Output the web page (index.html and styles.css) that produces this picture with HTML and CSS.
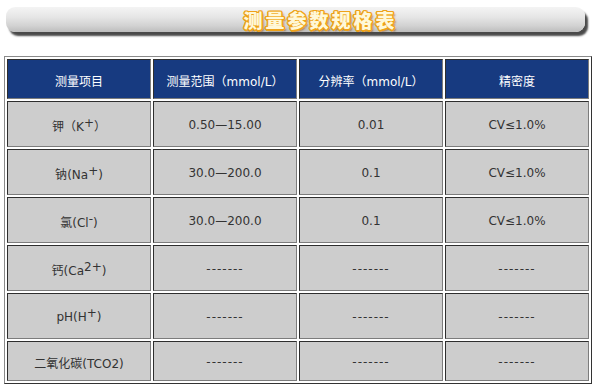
FILE: index.html
```html
<!DOCTYPE html>
<html lang="zh">
<head>
<meta charset="utf-8">
<title>测量参数规格表</title>
<link rel="stylesheet" href="styles.css">
</head>
<body>
<div class="page">
  <div class="title-bar">
    <h1 class="title">测量参数规格表</h1>
  </div>
  <table class="spec">
    <thead>
      <tr class="head-row">
        <th><span class="zh">测量项目</span></th>
        <th><span class="zh">测量范围（</span>mmol/L<span class="zh">）</span></th>
        <th><span class="zh">分辨率（</span>mmol/L<span class="zh">）</span></th>
        <th><span class="zh">精密度</span></th>
      </tr>
    </thead>
    <tbody>
      <tr class="row">
        <td><span class="zh">钾（</span>K<sup>+</sup><span class="zh">）</span></td>
        <td>0.50—15.00</td>
        <td>0.01</td>
        <td>CV≤1.0%</td>
      </tr>
      <tr class="row">
        <td><span class="zh">钠</span>(Na<sup>+</sup>)</td>
        <td>30.0—200.0</td>
        <td>0.1</td>
        <td>CV≤1.0%</td>
      </tr>
      <tr class="row">
        <td><span class="zh">氯</span>(Cl<sup>-</sup>)</td>
        <td>30.0—200.0</td>
        <td>0.1</td>
        <td>CV≤1.0%</td>
      </tr>
      <tr class="row">
        <td><span class="zh">钙</span>(Ca<sup>2+</sup>)</td>
        <td class="dash">-------</td>
        <td class="dash">-------</td>
        <td class="dash">-------</td>
      </tr>
      <tr class="row">
        <td>pH(H<sup>+</sup>)</td>
        <td class="dash">-------</td>
        <td class="dash">-------</td>
        <td class="dash">-------</td>
      </tr>
      <tr class="row row-last">
        <td><span class="zh">二氧化碳</span>(TCO2)</td>
        <td class="dash">-------</td>
        <td class="dash">-------</td>
        <td class="dash">-------</td>
      </tr>
    </tbody>
  </table>
</div>
</body>
</html>
```
FILE: styles.css
```css
html, body {
  margin: 0;
  padding: 0;
  background: #ffffff;
}

.page {
  padding-top: 7px;
  font-family: "DejaVu Sans", "Noto Sans CJK SC", sans-serif;
}

.title-bar {
  margin-left: 6px;
  width: 579px;
  height: 25px;
  border-radius: 9px;
  background: linear-gradient(to bottom, #f4f4f4 0%, #e6e6e6 40%, #d2d2d2 75%, #bdbdbd 100%);
  box-shadow: 3px 4px 2px #4a4a4a;
  display: flex;
  justify-content: center;
  align-items: center;
  padding-left: 50px;
  box-sizing: border-box;
}

.title {
  margin: 0;
  font-family: "Noto Sans CJK SC", sans-serif;
  font-weight: 900;
  font-size: 19px;
  line-height: 25px;
  letter-spacing: 3px;
  color: #fff8d8;
  text-shadow:
    1.5px 0 0 #eea21a, -1.5px 0 0 #eea21a, 0 1.5px 0 #eea21a, 0 -1.5px 0 #eea21a,
    1px 1px 0 #eea21a, -1px -1px 0 #eea21a, 1px -1px 0 #eea21a, -1px 1px 0 #eea21a,
    2px 2px 2px rgba(120, 70, 0, 0.6);
}

.spec {
  margin: 24px 0 0 4px;
  width: 588px;
  border-collapse: separate;
  border-spacing: 2px;
  border-style: solid;
  border-width: 1px;
  border-color: #8a8a8a #333333 #333333 #8a8a8a;
  table-layout: fixed;
  font-size: 12px;
}

.spec th,
.spec td {
  padding: 2px 0 0;
  text-align: center;
  vertical-align: middle;
  border-style: solid;
  border-width: 1px;
  border-color: #2e2e2e #7c7c7c #7c7c7c #2e2e2e;
}

.head-row th {
  height: 36px;
  background: #173a80;
  color: #ffffff;
  font-weight: normal;
}

.row td {
  height: 42px;
  background: #cdcdcd;
  color: #333333;
}

.row-last td {
  height: 36px;
}

.zh {
  font-family: "Noto Sans CJK SC", sans-serif;
  font-size: 12px;
}

sup {
  font-size: 1em;
  vertical-align: 4px;
  line-height: 0;
}

.dash {
  letter-spacing: 1px;
}
```
